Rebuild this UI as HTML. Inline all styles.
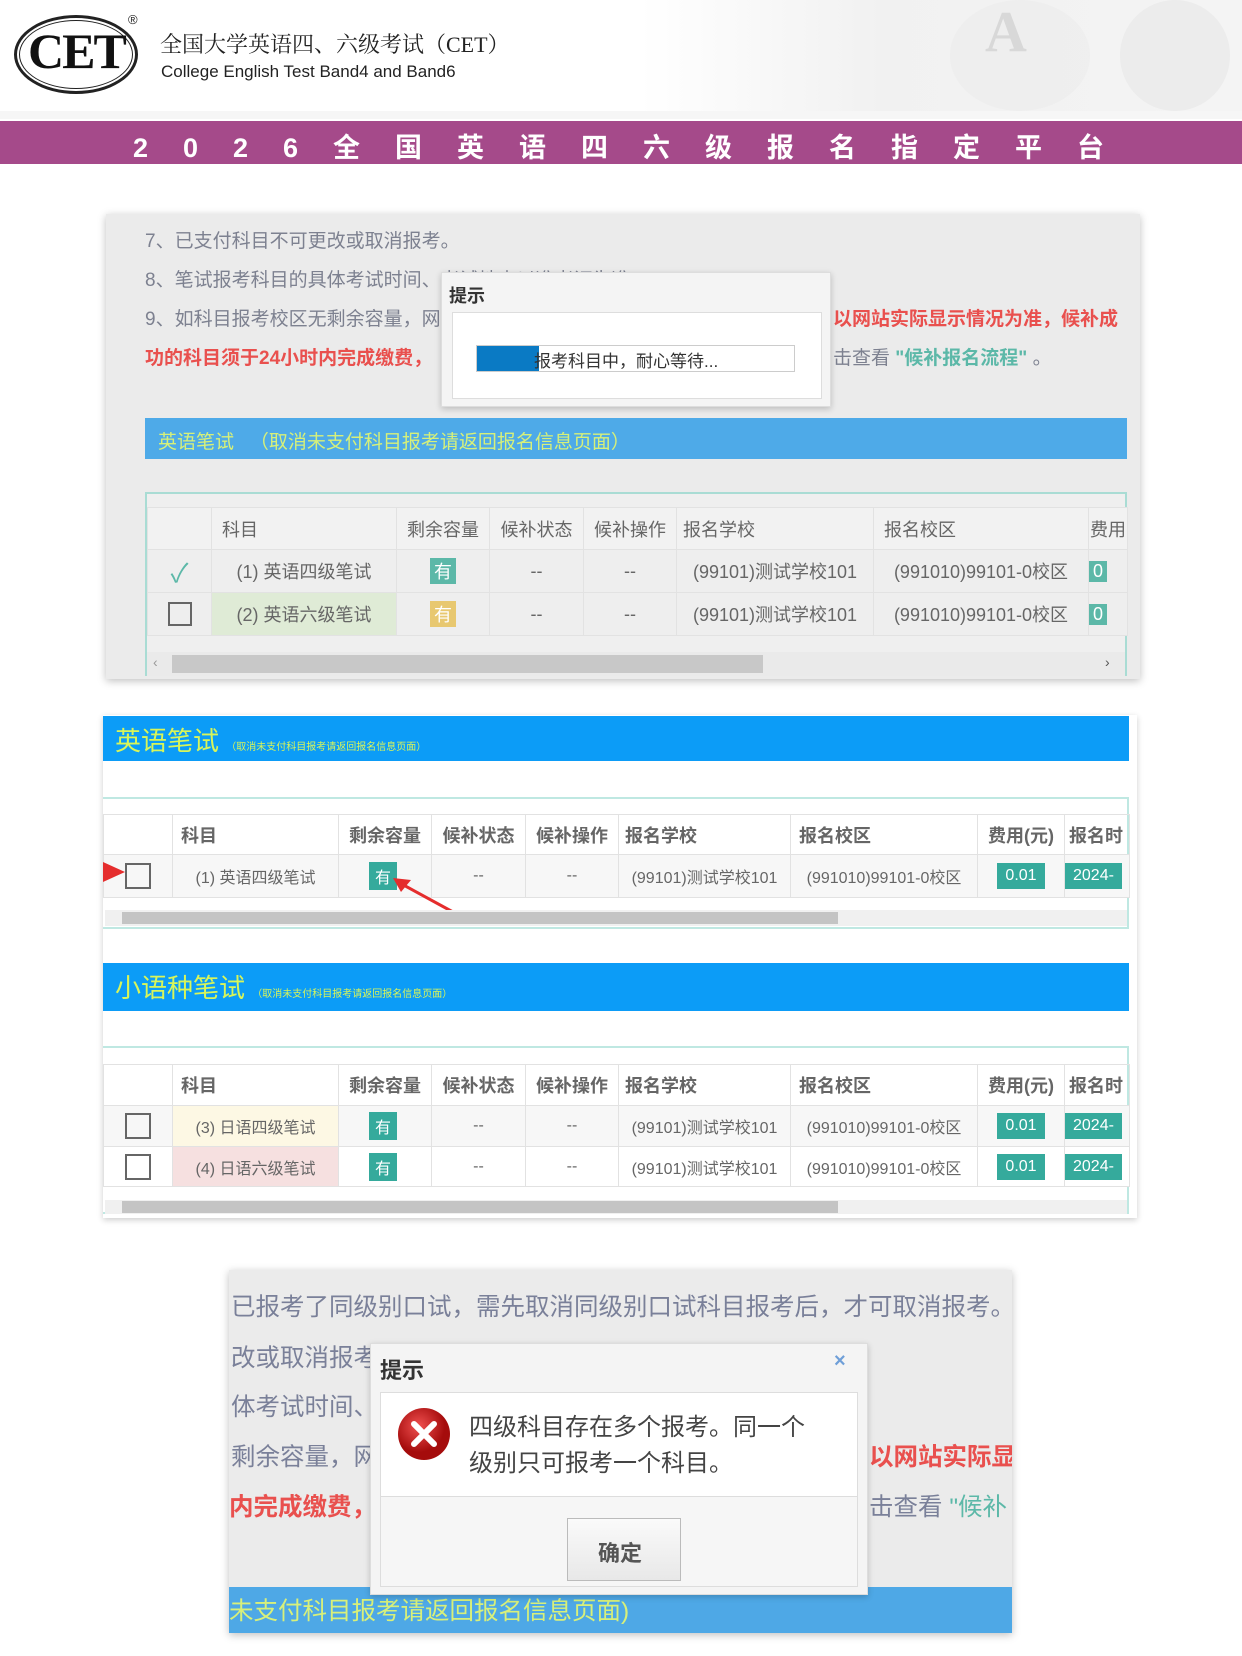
<!DOCTYPE html>
<html><head><meta charset="utf-8"><style>
*{margin:0;padding:0;box-sizing:border-box}
body{width:1242px;height:1656px;background:#fff;position:relative;overflow:hidden;font-family:"Liberation Sans","Noto Sans CJK SC",sans-serif}
.a{position:absolute}
.t{position:absolute;white-space:nowrap}
table{border-collapse:collapse;position:absolute;table-layout:fixed}
td{border:1px solid #e2e2e2;white-space:nowrap;overflow:hidden;text-align:center;color:#666}
.tag{display:inline-block;color:#fff;padding:0 4px}
.bn span{display:inline-block;width:62px}
.bn span.d{width:50px}
</style></head><body>
<!-- header -->
<div class="a" style="left:640px;top:0;width:602px;height:111px;background:linear-gradient(90deg,#fff,#f1f1f1 40%,#f4f4f4)"></div>
<div class="a" style="left:950px;top:0;width:140px;height:111px;border-radius:50%;background:#ececec;opacity:.7"></div>
<div class="a" style="left:1120px;top:0;width:110px;height:111px;border-radius:50%;background:#e8e8e8;opacity:.7"></div>
<div class="t" style="left:985px;top:-2px;font:bold 58px 'Liberation Serif',serif;color:#d8d8d8">A</div>
<div class="a" style="left:14px;top:15px;width:124px;height:79px;border:3px solid #222;border-radius:50%"></div>
<div class="a" style="left:19px;top:20px;width:114px;height:69px;border:1.5px solid #222;border-radius:50%"></div>
<div class="t" style="left:28px;top:22px;font:bold 50px 'Liberation Serif',serif;color:#111;letter-spacing:-2px">CET</div>
<div class="t" style="left:128px;top:12px;font:13px sans-serif;color:#222">®</div>
<div class="t" style="left:160px;top:28px;font:22px 'Liberation Serif','Noto Serif CJK SC',serif;color:#222">全国大学英语四、六级考试（CET）</div>
<div class="t" style="left:161px;top:62px;font:17px 'Liberation Sans',sans-serif;color:#222">College English Test Band4 and Band6</div>
<div class="a" style="left:0;top:111px;width:1242px;height:8px;background:#f6f6f6"></div>
<div class="a" style="left:0;top:121px;width:1242px;height:43px;background:#a54a8a"></div>
<div class="t bn" style="left:133px;top:126px;font:bold 27px 'Liberation Sans','Noto Sans CJK SC',sans-serif;color:#fff"><span class="d">2</span><span class="d">0</span><span class="d">2</span><span class="d">6</span><span>全</span><span>国</span><span>英</span><span>语</span><span>四</span><span>六</span><span>级</span><span>报</span><span>名</span><span>指</span><span>定</span><span>平</span><span>台</span></div>

<!-- panel 1 -->
<div class="a" style="left:106px;top:214px;width:1034px;height:465px;background:#ebebeb;box-shadow:0 2px 8px rgba(0,0,0,.25)"></div>
<div class="t" style="left:145px;top:226px;font:19px 'Liberation Sans','Noto Sans CJK SC',sans-serif;color:#7d8190">7、已支付科目不可更改或取消报考。</div>
<div class="t" style="left:145px;top:265px;font:19px 'Liberation Sans','Noto Sans CJK SC',sans-serif;color:#7d8190">8、笔试报考科目的具体考试时间、考试地点以准考证为准</div>
<div class="t" style="left:145px;top:304px;font:19px 'Liberation Sans','Noto Sans CJK SC',sans-serif;color:#7d8190">9、如科目报考校区无剩余容量，网</div>
<div class="t" style="left:833px;top:304px;font:bold 19px 'Liberation Sans','Noto Sans CJK SC',sans-serif;color:#e9504e">以网站实际显示情况为准，候补成</div>
<div class="t" style="left:145px;top:343px;font:bold 19px 'Liberation Sans','Noto Sans CJK SC',sans-serif;color:#e9504e">功的科目须于24小时内完成缴费，</div>
<div class="t" style="left:833px;top:343px;font:19px 'Liberation Sans','Noto Sans CJK SC',sans-serif;color:#7d8190">击查看 <span style="color:#5cb8a8;font-weight:bold">"候补报名流程"</span> 。</div>
<div class="a" style="left:441px;top:272px;width:390px;height:135px;background:#f4f4f4;border:1px solid #ddd;box-shadow:0 2px 6px rgba(0,0,0,.2)"></div>
<div class="t" style="left:449px;top:282px;font:bold 18px 'Liberation Sans','Noto Sans CJK SC',sans-serif;color:#333">提示</div>
<div class="a" style="left:452px;top:312px;width:370px;height:87px;background:#fff;border:1px solid #ddd"></div>
<div class="a" style="left:476px;top:345px;width:319px;height:27px;background:#fff;border:1px solid #ccc"></div>
<div class="a" style="left:477px;top:346px;width:62px;height:25px;background:#0a7ac4"></div>
<div class="t" style="left:534px;top:347px;font:17px 'Liberation Sans','Noto Sans CJK SC',sans-serif;color:#333">报考科目中，耐心等待...</div>
<div class="a" style="left:145px;top:418px;width:982px;height:41px;background:#4eaae8"></div>
<div class="t" style="left:158px;top:427px;font:19px 'Liberation Sans','Noto Sans CJK SC',sans-serif;color:#d6f07a">英语笔试 &nbsp;&nbsp;（取消未支付科目报考请返回报名信息页面）</div>
<div class="a" style="left:145px;top:492px;width:982px;height:184px;border:2px solid #a9dcd4;border-bottom:none;background:#efefef"></div>
<table style="left:147px;top:507px;width:980px;font:18px 'Liberation Sans','Noto Sans CJK SC',sans-serif">
<colgroup><col style="width:64px"><col style="width:185px"><col style="width:93px"><col style="width:94px"><col style="width:93px"><col style="width:197px"><col style="width:215px"><col style="width:39px"></colgroup>
<tr style="height:42px;background:#f2f2f2;color:#777"><td></td><td style="text-align:left;padding-left:10px">科目</td><td>剩余容量</td><td>候补状态</td><td>候补操作</td><td style="text-align:left;padding-left:6px">报名学校</td><td style="text-align:left;padding-left:10px">报名校区</td><td>费用</td></tr>
<tr style="height:43px;background:#eee"><td style="color:#5cb8a8;font-size:26px">✓</td><td>(1) 英语四级笔试</td><td><span class="tag" style="background:#5cb8a8">有</span></td><td>--</td><td>--</td><td>(99101)测试学校101</td><td>(991010)99101-0校区</td><td style="text-align:left"><span class="tag" style="background:#5cb8a8">0</span></td></tr>
<tr style="height:43px;background:#eee"><td><span style="display:inline-block;width:24px;height:24px;border:2px solid #666;vertical-align:middle"></span></td><td style="background:#dfebd6">(2) 英语六级笔试</td><td><span class="tag" style="background:#e8c870">有</span></td><td>--</td><td>--</td><td>(99101)测试学校101</td><td>(991010)99101-0校区</td><td style="text-align:left"><span class="tag" style="background:#5cb8a8">0</span></td></tr>
</table>
<div class="a" style="left:147px;top:652px;width:978px;height:24px;background:#eaeaea"></div>
<div class="a" style="left:172px;top:655px;width:591px;height:18px;background:#c8c8c8"></div>
<div class="t" style="left:153px;top:654px;font:14px sans-serif;color:#999">‹</div>
<div class="t" style="left:1105px;top:654px;font:14px sans-serif;color:#555">›</div>

<!-- panel 2 -->
<div class="a" style="left:103px;top:715px;width:1034px;height:503px;background:#fff;box-shadow:0 2px 6px rgba(0,0,0,.2)"></div>
<div class="a" style="left:103px;top:716px;width:1026px;height:45px;background:#0c9cf7"></div>
<div class="t" style="left:115px;top:721px;font:26px 'Liberation Sans','Noto Sans CJK SC',sans-serif;color:#d8f55a">英语笔试 <span style="font-size:10px">（取消未支付科目报考请返回报名信息页面）</span></div>
<div class="a" style="left:103px;top:797px;width:1026px;height:132px;border:2px solid #bfe8e2;border-left:none"></div>
<table style="left:103px;top:814px;width:1026px;font:bold 18px 'Liberation Sans','Noto Sans CJK SC',sans-serif">
<colgroup><col style="width:69px"><col style="width:166px"><col style="width:93px"><col style="width:94px"><col style="width:93px"><col style="width:172px"><col style="width:187px"><col style="width:87px"><col style="width:65px"></colgroup>
<tr style="height:40px;color:#444"><td></td><td style="text-align:left;padding-left:8px">科目</td><td>剩余容量</td><td>候补状态</td><td>候补操作</td><td style="text-align:left;padding-left:6px">报名学校</td><td style="text-align:left;padding-left:8px">报名校区</td><td>费用(元)</td><td style="text-align:left;padding-left:4px">报名时</td></tr>
<tr style="height:43px;background:#f7f7f7;font-weight:normal;font-size:16px"><td><span style="display:inline-block;width:26px;height:26px;border:2px solid #666;vertical-align:middle"></span></td><td>(1) 英语四级笔试</td><td style="text-align:left;padding-left:30px"><span class="tag" style="background:#35aa9c;padding:2px 6px">有</span></td><td>--</td><td>--</td><td>(99101)测试学校101</td><td>(991010)99101-0校区</td><td><span class="tag" style="background:#35aa9c;padding:4px 8px">0.01</span></td><td style="text-align:left"><span class="tag" style="background:#35aa9c;padding:4px 8px">2024-</span></td></tr>
</table>
<svg class="a" style="left:103px;top:862px" width="360" height="60"><polygon points="0,0 22,10 0,20" fill="#e52d2d"/><line x1="350" y1="50" x2="295" y2="20" stroke="#e52d2d" stroke-width="3"/><polygon points="290,16 308,18 298,30" fill="#e52d2d"/></svg>
<div class="a" style="left:105px;top:910px;width:1022px;height:16px;background:#f0f0f0"></div>
<div class="a" style="left:122px;top:912px;width:716px;height:12px;background:#c4c4c4"></div>

<div class="a" style="left:103px;top:963px;width:1026px;height:48px;background:#0c9cf7"></div>
<div class="t" style="left:115px;top:968px;font:26px 'Liberation Sans','Noto Sans CJK SC',sans-serif;color:#d8f55a">小语种笔试 <span style="font-size:10px">（取消未支付科目报考请返回报名信息页面）</span></div>
<div class="a" style="left:103px;top:1046px;width:1026px;height:168px;border:2px solid #bfe8e2;border-left:none"></div>
<table style="left:103px;top:1064px;width:1026px;font:bold 18px 'Liberation Sans','Noto Sans CJK SC',sans-serif">
<colgroup><col style="width:69px"><col style="width:166px"><col style="width:93px"><col style="width:94px"><col style="width:93px"><col style="width:172px"><col style="width:187px"><col style="width:87px"><col style="width:65px"></colgroup>
<tr style="height:41px;color:#444"><td></td><td style="text-align:left;padding-left:8px">科目</td><td>剩余容量</td><td>候补状态</td><td>候补操作</td><td style="text-align:left;padding-left:6px">报名学校</td><td style="text-align:left;padding-left:8px">报名校区</td><td>费用(元)</td><td style="text-align:left;padding-left:4px">报名时</td></tr>
<tr style="height:41px;background:#f7f7f7;font-weight:normal;font-size:16px"><td><span style="display:inline-block;width:26px;height:26px;border:2px solid #666;vertical-align:middle"></span></td><td style="background:#fdf8e4">(3) 日语四级笔试</td><td style="text-align:left;padding-left:30px"><span class="tag" style="background:#35aa9c;padding:2px 6px">有</span></td><td>--</td><td>--</td><td>(99101)测试学校101</td><td>(991010)99101-0校区</td><td><span class="tag" style="background:#35aa9c;padding:4px 8px">0.01</span></td><td style="text-align:left"><span class="tag" style="background:#35aa9c;padding:4px 8px">2024-</span></td></tr>
<tr style="height:40px;background:#fff;font-weight:normal;font-size:16px"><td><span style="display:inline-block;width:26px;height:26px;border:2px solid #666;vertical-align:middle"></span></td><td style="background:#f6e0e0">(4) 日语六级笔试</td><td style="text-align:left;padding-left:30px"><span class="tag" style="background:#35aa9c;padding:2px 6px">有</span></td><td>--</td><td>--</td><td>(99101)测试学校101</td><td>(991010)99101-0校区</td><td><span class="tag" style="background:#35aa9c;padding:4px 8px">0.01</span></td><td style="text-align:left"><span class="tag" style="background:#35aa9c;padding:4px 8px">2024-</span></td></tr>
</table>
<div class="a" style="left:105px;top:1200px;width:1022px;height:14px;background:#f0f0f0"></div>
<div class="a" style="left:122px;top:1201px;width:716px;height:12px;background:#c4c4c4"></div>

<!-- panel 3 -->
<div class="a" style="left:229px;top:1270px;width:783px;height:363px;background:#ebebeb;box-shadow:0 2px 8px rgba(0,0,0,.25);overflow:hidden">
<div class="t" style="left:2px;top:18px;font:24.5px 'Liberation Sans','Noto Sans CJK SC',sans-serif;color:#7a8099">已报考了同级别口试，需先取消同级别口试科目报考后，才可取消报考。</div>
<div class="t" style="left:2px;top:69px;font:24.5px 'Liberation Sans','Noto Sans CJK SC',sans-serif;color:#7a8099">改或取消报考</div>
<div class="t" style="left:2px;top:118px;font:24.5px 'Liberation Sans','Noto Sans CJK SC',sans-serif;color:#7a8099">体考试时间、</div>
<div class="t" style="left:2px;top:168px;font:24.5px 'Liberation Sans','Noto Sans CJK SC',sans-serif;color:#7a8099">剩余容量，网</div>
<div class="t" style="left:640px;top:168px;font:bold 24.5px 'Liberation Sans','Noto Sans CJK SC',sans-serif;color:#e9504e">以网站实际显示</div>
<div class="t" style="left:0;top:218px;font:bold 24.5px 'Liberation Sans','Noto Sans CJK SC',sans-serif;color:#e9504e">内完成缴费，</div>
<div class="t" style="left:640px;top:218px;font:24.5px 'Liberation Sans','Noto Sans CJK SC',sans-serif;color:#7a8099">击查看 <span style="color:#5cb8a8">"候补</span></div>
<div class="a" style="left:0;top:317px;width:783px;height:46px;background:#4ea8e6"></div>
<div class="t" style="left:0;top:322px;font:24.5px 'Liberation Sans','Noto Sans CJK SC',sans-serif;color:#d8f07a">未支付科目报考请返回报名信息页面)</div>
</div>
<div class="a" style="left:370px;top:1343px;width:498px;height:252px;background:#f4f4f4;border:1px solid #ddd;box-shadow:0 2px 6px rgba(0,0,0,.2)"></div>
<div class="t" style="left:380px;top:1353px;font:bold 22px 'Liberation Sans','Noto Sans CJK SC',sans-serif;color:#333">提示</div>
<div class="t" style="left:834px;top:1350px;font:bold 20px sans-serif;color:#6f9fd8">×</div>
<div class="a" style="left:380px;top:1392px;width:478px;height:105px;background:#fff;border:1px solid #ddd"></div>
<svg class="a" style="left:396px;top:1406px" width="56" height="56"><defs><radialGradient id="g" cx="40%" cy="35%"><stop offset="0" stop-color="#f05050"/><stop offset="1" stop-color="#a50c0c"/></radialGradient></defs><circle cx="28" cy="28" r="26" fill="url(#g)"/><path d="M18 18L38 38M38 18L18 38" stroke="#fff" stroke-width="6" stroke-linecap="round"/></svg>
<div class="t" style="left:469px;top:1410px;font:24px 'Liberation Sans','Noto Sans CJK SC',sans-serif;color:#444;line-height:36px">四级科目存在多个报考。同一个<br>级别只可报考一个科目。</div>
<div class="a" style="left:380px;top:1497px;width:478px;height:90px;background:#f6f6f6;border:1px solid #ddd;border-top:none"></div>
<div class="a" style="left:567px;top:1518px;width:114px;height:63px;background:linear-gradient(#fafafa,#e8e8e8);border:1px solid #bbb"></div>
<div class="t" style="left:598px;top:1536px;font:bold 22px 'Liberation Sans','Noto Sans CJK SC',sans-serif;color:#555">确定</div>
</body></html>
